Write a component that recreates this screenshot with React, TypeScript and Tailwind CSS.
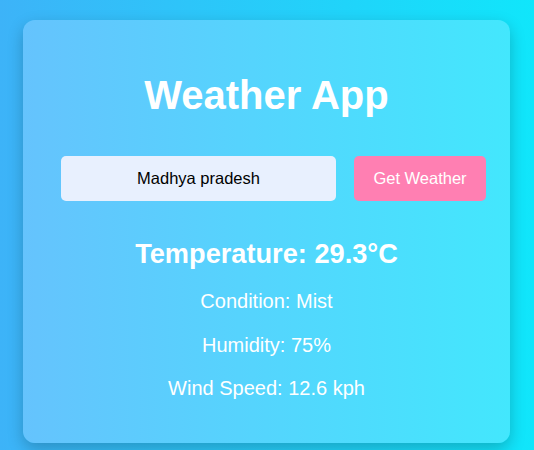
import React from "react";

export default function App() {
  return (
    <div className="w-[534px] h-[450px] overflow-hidden bg-[linear-gradient(to_right,#3db3f8,#10e6fb)] pt-[20px] font-['Liberation_Sans',Arial,sans-serif]">
      <div className="ml-[23px] w-[487px] h-[423px] rounded-[12px] bg-[linear-gradient(to_right,#65c3fd,#43e7fd)] shadow-[0_6px_16px_rgba(0,0,0,0.22)] pt-[52px] text-white text-center">
        <h1 className="text-[40px] leading-[46px] font-bold">Weather App</h1>
        <div className="mt-[38px] flex pl-[38px] gap-[18px]">
          <input
            className="w-[275px] h-[45px] rounded-[5px] bg-[#e8f0fe] text-black text-[16.5px] text-center outline-none"
            defaultValue="Madhya pradesh"
          />
          <button className="w-[132px] h-[45px] rounded-[5px] bg-[#ff7fb2] text-white text-[16.5px]">
            Get Weather
          </button>
        </div>
        <p className="mt-[37px] text-[27.2px] leading-[32px] font-bold">Temperature: 29.3°C</p>
        <p className="mt-[19px] text-[20px] leading-[24px]">Condition: Mist</p>
        <p className="mt-[20px] text-[20px] leading-[24px]">Humidity: 75%</p>
        <p className="mt-[19px] text-[20px] leading-[24px]">Wind Speed: 12.6 kph</p>
      </div>
    </div>
  );
}
